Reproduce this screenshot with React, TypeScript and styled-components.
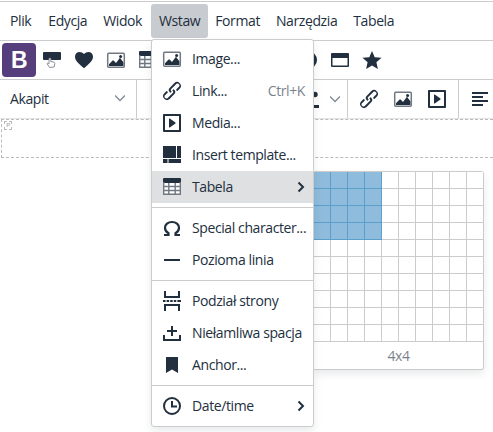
import React from "react";
import styled, { createGlobalStyle } from "styled-components";

const GlobalStyle = createGlobalStyle`
  html, body {
    margin: 0;
    background: #fff;
    overflow: hidden;
  }
  body {
    font-family: "Open Sans", "Noto Sans", sans-serif;
    font-size: 14px;
    letter-spacing: -0.4px;
    color: #222f3e;
  }
`;

const icons: Record<string, React.ReactNode> = {
  cursor: (
    <>
      <rect x="3" y="4" width="18" height="8" rx="1" fill="#222f3e" />
      <path d="M9.500 19.500 7 15.500c.6-.6 1.400-.2 2 .5v-5c0-1.200 1.800-1.200 1.800 0v2.500l3 .6c.8.2 1.200.8 1 1.600l-.7 3.300z" fill="#fff" stroke="#8a919a" strokeWidth="1" />
    </>
  ),
  heart: <path d="M12 20.300l-1.200-1.100C6 14.900 3 12.100 3 8.700 3 6 5 4 7.600 4c1.600 0 3.200.8 4.400 2.100C13.200 4.800 14.800 4 16.400 4 19 4 21 6 21 8.700c0 3.400-3 6.200-7.800 10.500L12 20.300z" />,
  image: (
    <>
      <rect x="3.700" y="5.200" width="16.600" height="14.100" rx="1" fill="#fff" stroke="#6f7883" strokeWidth="1.500" />
      <path d="M5 18v-1.800l3.600-3.600c.3-.3.7-.3 1 0l2.400 2.400 3.400-4.600c.3-.4.8-.4 1.100 0l2.900 3.800V18z" />
      <circle cx="16.600" cy="8.400" r="1.500" />
    </>
  ),
  table: (
    <>
      <rect x="3" y="3" width="18" height="17" rx="1" fill="#fff" />
      <path d="M4 3h16a1 1 0 0 1 1 1v4H3V4a1 1 0 0 1 1-1z" />
      <path d="M3.700 7v12.300h16.600V7M3.700 11.500h16.600M3.700 15.500h16.600M8.800 8v11.300M15.200 8v11.300" fill="none" stroke="#6f7883" strokeWidth="1.400" />
    </>
  ),
  circle: <circle cx="12" cy="12" r="9" />,
  window: <path d="M4 5h16a1 1 0 0 1 1 1v12a1 1 0 0 1-1 1H4a1 1 0 0 1-1-1V6a1 1 0 0 1 1-1zm.5 5v7.500h15V10z" fillRule="evenodd" />,
  star: <path d="M12 3l2.700 6.200 6.800.6-5.100 4.500 1.500 6.700L12 17.500 6.100 21l1.500-6.700L2.500 9.800l6.800-.6z" />,
  link: <path d="M6.200 12.300a1 1 0 0 1 1.400 1.400l-2 2a2 2 0 1 0 2.600 2.800l4.800-4.800a1 1 0 0 0 0-1.400 1 1 0 1 1 1.400-1.300 2.900 2.900 0 0 1 0 4L9.600 20a3.900 3.900 0 0 1-5.500-5.500l2-2zm11.600-.6a1 1 0 0 1-1.400-1.400l2-2a2 2 0 1 0-2.600-2.800L11 10.300a1 1 0 0 0 0 1.400A1 1 0 1 1 9.600 13a2.900 2.900 0 0 1 0-4L14.400 4a3.900 3.900 0 0 1 5.500 5.500l-2 2z" />,
  media: <path d="M4 3h16c.6 0 1 .4 1 1v16c0 .6-.4 1-1 1H4a1 1 0 0 1-1-1V4c0-.6.4-1 1-1zm1 2v14h14V5H5zm4.800 2.600l5.600 4a.5.5 0 0 1 0 .8l-5.600 4A.5.5 0 0 1 9 16V8a.5.5 0 0 1 .8-.4z" />,
  template: <path d="M3 3h13v12H3zM17 3h4v12h-4zM3 16h4.500v4H3zM8.500 16H21v4H8.500z" />,
  omega: <path d="M4 19h4.500v-1.800C6.300 16 5 14.100 5 11.800 5 8.500 8 6 12 6s7 2.500 7 5.800c0 2.300-1.300 4.200-3.500 5.400V19H20" fill="none" stroke="#222f3e" strokeWidth="2.200" />,
  hr: <rect x="4" y="11" width="16" height="2" />,
  pagebreak: (
    <>
      <path d="M4 2h2v5h12V2h2v7H4zM4 22h2v-5h12v5h2v-7H4z" />
      <path d="M3 11h2.500v2H3zm3.600 0h2.500v2H6.600zm3.600 0h2.500v2h-2.500zm3.600 0h2.500v2h-2.500zm3.600 0H21v2h-3.600z" />
    </>
  ),
  nbsp: <path d="M11 5h2v4h4v2h-4v4h-2v-4H7V9h4zM3 14h2v4h14v-4h2v6H3z" />,
  bookmark: <path d="M6 4h12v16l-6-3.500L6 20z" />,
  clock: (
    <>
      <circle cx="12" cy="12" r="8" fill="none" stroke="#222f3e" strokeWidth="2" />
      <path d="M11 7h2v4.500h4v2h-6z" />
    </>
  ),
  fill: (
    <>
      <circle cx="16" cy="7.500" r="2.700" />
      <rect x="5" y="18" width="15" height="3" />
    </>
  ),
  align: <path d="M4 5h16v2H4zm0 4h11v2H4zm0 4h16v2H4zm0 4h11v2H4z" />,
};

const IconSvg = styled.svg`
  flex-shrink: 0;
`;

const Icon = ({ name }: { name: string }) => (
  <IconSvg width="24" height="24" viewBox="0 0 24 24" fill="#222f3e">
    {icons[name]}
  </IconSvg>
);

const Page = styled.div`
  position: relative;
  width: 493px;
  height: 432px;
  overflow: hidden;
`;

const Header = styled.div`
  margin-top: 1px;
  border-top: 1px solid #cccccc;
`;

const MenuBar = styled.div`
  display: flex;
  align-items: center;
  height: 38px;
  border-bottom: 1px solid #cccccc;
  padding-left: 2px;
`;

const MenuButton = styled.div<{ $active?: boolean }>`
  height: 34px;
  line-height: 34px;
  padding: 0 8px;
  border-radius: 3px;
  background: ${(p) => (p.$active ? "#c8cbcf" : "transparent")};
  margin: ${(p) => (p.$active ? "0 -1px 0 1px" : "0")};

  &:first-child {
    margin-right: 1px;
  }
`;

const Row = styled.div<{ $line?: string }>`
  display: flex;
  align-items: center;
  height: 38px;
  border-bottom: 1px solid ${(p) => p.$line ?? "#cccccc"};
`;

const ToolRow = styled(Row)`
  padding-left: 2px;
`;

const BootstrapButton = styled.div`
  width: 34px;
  height: 34px;
  border-radius: 4px;
  background: #563d7c;
  display: flex;
  align-items: center;
  justify-content: center;
  color: #fff;
  font-family: "Liberation Sans", sans-serif;
  font-weight: 700;
  font-size: 23px;
`;

const ToolIcon = styled.div<{ $width?: number }>`
  width: ${(p) => p.$width ?? 32}px;
  height: 34px;
  flex-shrink: 0;
  display: flex;
  align-items: center;
  justify-content: center;
`;

const Group = styled.div`
  display: flex;
  align-items: center;
  flex-shrink: 0;
  box-sizing: border-box;
  height: 100%;
  padding: 0 4px;
  border-right: 1px solid #cccccc;
`;

const SplitGroup = styled(Group)`
  justify-content: flex-end;
  width: 211px;
  padding-right: 0;
`;

const LastGroup = styled(Group)`
  border-right: none;
`;

const FormatSelect = styled.div`
  display: flex;
  align-items: center;
  justify-content: space-between;
  box-sizing: border-box;
  flex-shrink: 0;
  width: 137px;
  height: 100%;
  padding: 0 11px 2px 10px;
  border-right: 1px solid #cccccc;
`;

const ChevronDown = () => (
  <IconSvg width="10" height="10" viewBox="0 0 10 10">
    <path d="M0 2.500 5 7.500l5-5" fill="none" stroke="#868d96" strokeWidth="1.500" />
  </IconSvg>
);

const SplitCaret = styled.div`
  width: 24px;
  display: flex;
  justify-content: center;
`;

const Editor = styled.div`
  position: relative;
  box-sizing: border-box;
  margin-left: 1px;
  height: 39px;
  border: 1px dashed #bbbbbb;
  border-right: none;
`;

const ParagraphTag = styled.span`
  position: absolute;
  top: 1px;
  left: 2px;
  width: 6px;
  height: 7px;
  border: 1px dashed #bbbbbb;
  font-family: "Liberation Sans", sans-serif;
  font-size: 6px;
  line-height: 7px;
  text-align: center;
  color: #999;
`;

const Menu = styled.div`
  position: absolute;
  top: 39px;
  left: 151px;
  z-index: 2;
  box-sizing: border-box;
  width: 163px;
  padding: 3px 0 4px;
  background: #fff;
  border: 1px solid #cccccc;
  border-radius: 3px;
  box-shadow: 0 4px 8px 0 rgba(34, 47, 62, 0.1);
`;

const Item = styled.div<{ $active?: boolean }>`
  display: flex;
  align-items: center;
  height: 32px;
  padding: 0 8px;
  background: ${(p) => (p.$active ? "#dee0e2" : "transparent")};
`;

const ItemLabel = styled.span`
  flex: 1;
  margin-left: 8px;
  padding-bottom: 2px;
  white-space: nowrap;
`;

const Shortcut = styled.span`
  padding-bottom: 2px;
  opacity: 0.6;
`;

const ChevronRight = styled.svg`
  flex-shrink: 0;
`;

const Divider = styled.div`
  height: 1px;
  margin: 4px 0;
  background: #cccccc;
`;

const TablePicker = styled.div`
  position: absolute;
  top: 171px;
  left: 313px;
  z-index: 1;
  box-sizing: border-box;
  width: 171px;
  height: 199px;
  padding-left: 1px;
  background: #fff;
  border: 1px solid #cccccc;
  border-left: none;
  border-radius: 3px;
  box-shadow: 0 4px 8px 0 rgba(34, 47, 62, 0.1);
`;

const CellGrid = styled.div`
  display: grid;
  grid-template-columns: repeat(9, 17px) 16px;
  grid-auto-rows: 17px;
`;

const Cell = styled.div<{ $on: boolean }>`
  box-sizing: border-box;
  border-right: 1px solid ${(p) => (p.$on ? "#5b9fcd" : "#cccccc")};
  border-bottom: 1px solid ${(p) => (p.$on ? "#5b9fcd" : "#cccccc")};
  background: ${(p) => (p.$on ? "#8fbcdc" : "#fff")};

  &:nth-child(10n) {
    border-right: none;
  }
`;

const PickerLabel = styled.div`
  height: 27px;
  line-height: 27px;
  text-align: center;
  color: #222f3e;
  opacity: 0.6;
`;

type Entry = { icon: string; label: string; shortcut?: string; sub?: boolean; active?: boolean };

const menuGroups: Entry[][] = [
  [
    { icon: "image", label: "Image..." },
    { icon: "link", label: "Link...", shortcut: "Ctrl+K" },
    { icon: "media", label: "Media..." },
    { icon: "template", label: "Insert template..." },
    { icon: "table", label: "Tabela", sub: true, active: true },
  ],
  [
    { icon: "omega", label: "Special character..." },
    { icon: "hr", label: "Pozioma linia" },
  ],
  [
    { icon: "pagebreak", label: "Podział strony" },
    { icon: "nbsp", label: "Niełamliwa spacja" },
    { icon: "bookmark", label: "Anchor..." },
  ],
  [{ icon: "clock", label: "Date/time", sub: true }],
];

const menuBar = ["Plik", "Edycja", "Widok", "Wstaw", "Format", "Narzędzia", "Tabela"];
const firstRow = ["cursor", "heart", "image", "table", "", "", "", "", "circle", "window", "star"];

export default function App() {
  return (
    <Page>
      <GlobalStyle />
      <Header>
        <MenuBar>
          {menuBar.map((m) => (
            <MenuButton key={m} $active={m === "Wstaw"}>
              {m}
            </MenuButton>
          ))}
        </MenuBar>
        <ToolRow>
          <BootstrapButton>B</BootstrapButton>
          {firstRow.map((name, i) => (
            <ToolIcon key={i}>{name && <Icon name={name} />}</ToolIcon>
          ))}
        </ToolRow>
        <Row $line="#e4e4e4">
          <FormatSelect>
            Akapit
            <ChevronDown />
          </FormatSelect>
          <SplitGroup>
            <ToolIcon $width={24}>
              <Icon name="fill" />
            </ToolIcon>
            <SplitCaret>
              <ChevronDown />
            </SplitCaret>
          </SplitGroup>
          <Group>
            <ToolIcon $width={34}>
              <Icon name="link" />
            </ToolIcon>
            <ToolIcon $width={34}>
              <Icon name="image" />
            </ToolIcon>
            <ToolIcon $width={34}>
              <Icon name="media" />
            </ToolIcon>
          </Group>
          <LastGroup>
            <ToolIcon $width={34}>
              <Icon name="align" />
            </ToolIcon>
          </LastGroup>
        </Row>
      </Header>
      <Editor>
        <ParagraphTag>P</ParagraphTag>
      </Editor>
      <Menu>
        {menuGroups.map((group, g) => (
          <React.Fragment key={g}>
            {g > 0 && <Divider />}
            {group.map((e) => (
              <Item key={e.label} $active={e.active}>
                <Icon name={e.icon} />
                <ItemLabel>{e.label}</ItemLabel>
                {e.shortcut && <Shortcut>{e.shortcut}</Shortcut>}
                {e.sub && (
                  <ChevronRight width="8" height="12" viewBox="0 0 8 12">
                    <path d="M1.500 1.500 6 6l-4.500 4.500" fill="none" stroke="#222f3e" strokeWidth="2" />
                  </ChevronRight>
                )}
              </Item>
            ))}
          </React.Fragment>
        ))}
      </Menu>
      <TablePicker>
        <CellGrid>
          {Array.from({ length: 100 }, (_, i) => (
            <Cell key={i} $on={i % 10 < 4 && i < 40} />
          ))}
        </CellGrid>
        <PickerLabel>4x4</PickerLabel>
      </TablePicker>
    </Page>
  );
}
